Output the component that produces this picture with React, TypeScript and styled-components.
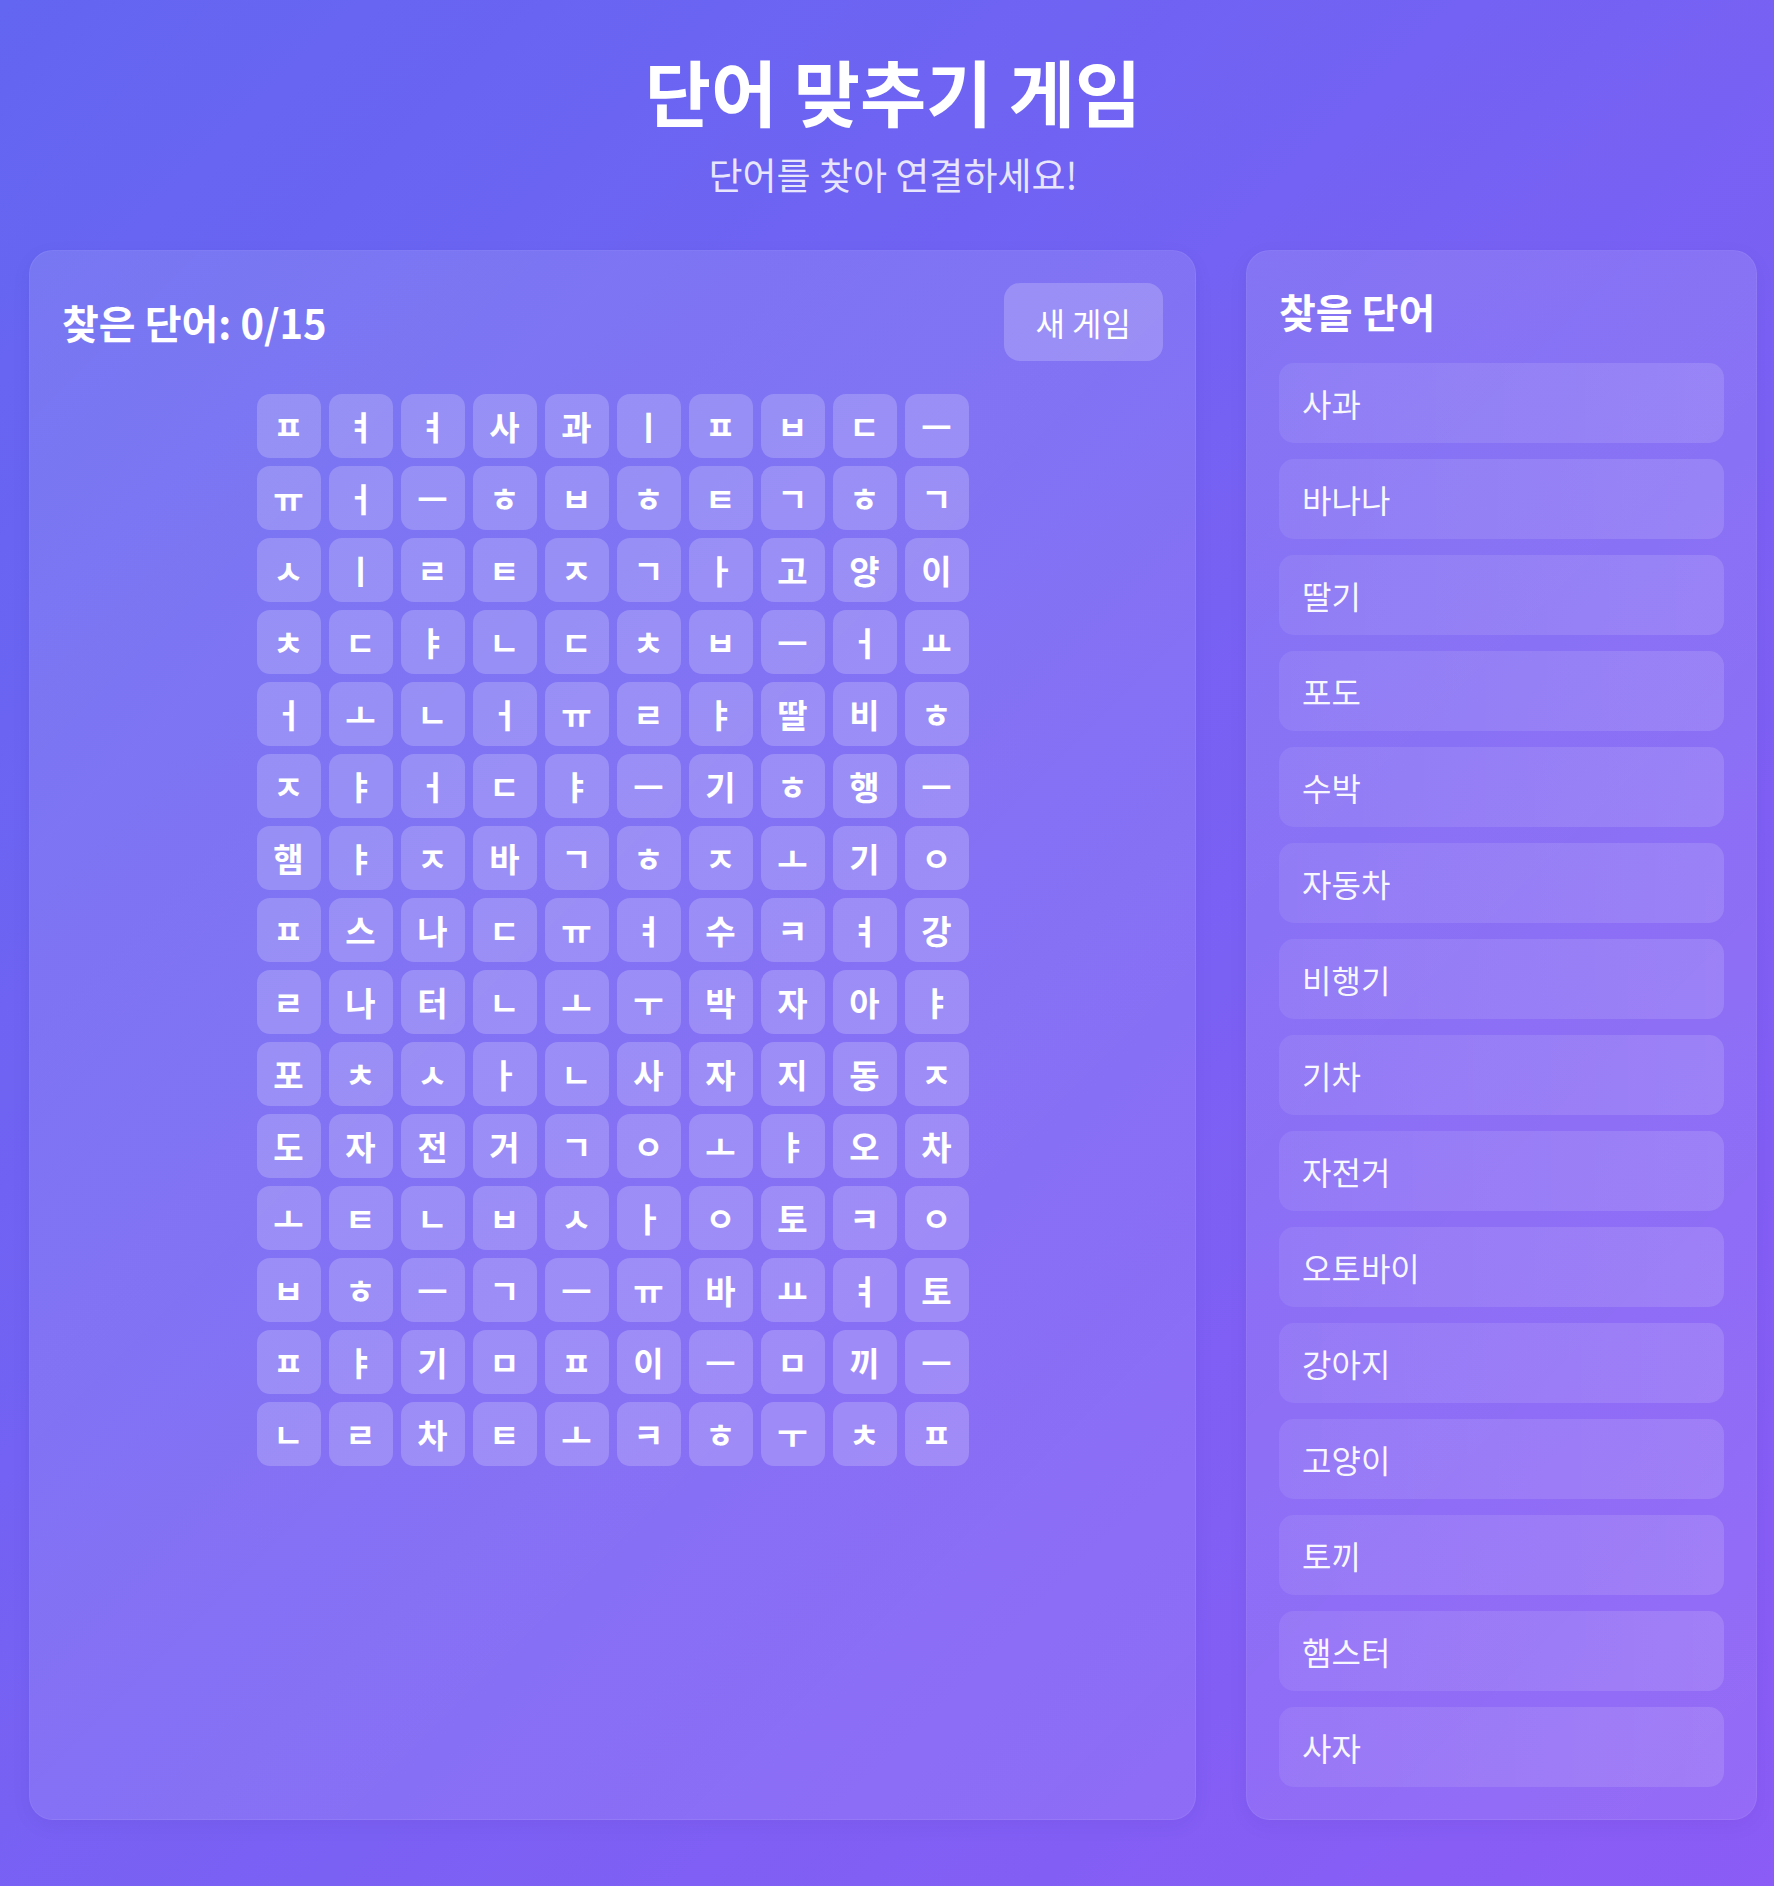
import React from 'react'
import styled, { createGlobalStyle } from 'styled-components'

const GlobalStyle = createGlobalStyle`
  html, body {
    margin: 0;
    padding: 0;
  }
  body {
    font-family: 'Noto Sans CJK KR', 'Noto Sans', sans-serif;
    color: #fff;
  }
  * {
    box-sizing: border-box;
  }
`

const Page = styled.div`
  min-height: 100vh;
  padding: 51px 17px 40px 29px;
  background: linear-gradient(135deg, #6366f1 0%, #8b5cf6 100%);
`

const Header = styled.header`
  text-align: center;
  margin-bottom: 51px;
`

const Title = styled.h1`
  margin: 0 0 21px;
  font-size: 72px;
  line-height: 77px;
  font-weight: 700;
`

const Subtitle = styled.p`
  margin: 0;
  font-size: 37px;
  line-height: 50px;
  font-weight: 400;
  color: rgba(255, 255, 255, 0.85);
`

const Layout = styled.main`
  display: grid;
  grid-template-columns: 1fr 511px;
  gap: 50px;
`

const Panel = styled.section`
  padding: 32px;
  border-radius: 24px;
  background: linear-gradient(135deg, rgba(255, 255, 255, 0.12) 0%, rgba(255, 255, 255, 0.09) 100%);
  border: 1px solid rgba(255, 255, 255, 0.06);
  box-shadow: 0 6px 20px rgba(40, 20, 120, 0.06);
`

const Toolbar = styled.div`
  display: flex;
  justify-content: space-between;
  align-items: center;
`

const Score = styled.h2`
  margin: 0;
  font-size: 40px;
  font-weight: 700;
`

const NewGameButton = styled.button`
  padding: 16px 32px;
  border: none;
  border-radius: 16px;
  background: rgba(255, 255, 255, 0.2);
  color: #fff;
  font-family: inherit;
  font-size: 32px;
  line-height: 46px;
  cursor: pointer;
`

const Board = styled.div`
  display: grid;
  grid-template-columns: repeat(10, 64px);
  grid-auto-rows: 64px;
  gap: 8px;
  justify-content: center;
  margin-top: 33px;
`

const Cell = styled.div`
  display: flex;
  align-items: center;
  justify-content: center;
  border-radius: 13px;
  background: rgba(255, 255, 255, 0.2);
  font-size: 33px;
  font-weight: 700;
  user-select: none;
`

const ListTitle = styled.h2`
  margin: 4px 0 28px;
  font-size: 40px;
  line-height: 48px;
  font-weight: 700;
`

const WordList = styled.ul`
  display: flex;
  flex-direction: column;
  gap: 16px;
  margin: 0;
  padding: 0;
  list-style: none;
`

const WordItem = styled.li<{ $found?: boolean }>`
  padding: 17px 23px;
  border-radius: 15px;
  background: linear-gradient(90deg, rgba(255, 255, 255, 0.08) 0%, rgba(255, 255, 255, 0.13) 100%);
  font-size: 32px;
  line-height: 46px;
  color: rgba(255, 255, 255, 0.95);
  text-decoration: ${p => (p.$found ? 'line-through' : 'none')};
`

const board = [
  'ㅍ ㅕ ㅕ 사 과 ㅣ ㅍ ㅂ ㄷ ㅡ',
  'ㅠ ㅓ ㅡ ㅎ ㅂ ㅎ ㅌ ㄱ ㅎ ㄱ',
  'ㅅ ㅣ ㄹ ㅌ ㅈ ㄱ ㅏ 고 양 이',
  'ㅊ ㄷ ㅑ ㄴ ㄷ ㅊ ㅂ ㅡ ㅓ ㅛ',
  'ㅓ ㅗ ㄴ ㅓ ㅠ ㄹ ㅑ 딸 비 ㅎ',
  'ㅈ ㅑ ㅓ ㄷ ㅑ ㅡ 기 ㅎ 행 ㅡ',
  '햄 ㅑ ㅈ 바 ㄱ ㅎ ㅈ ㅗ 기 ㅇ',
  'ㅍ 스 나 ㄷ ㅠ ㅕ 수 ㅋ ㅕ 강',
  'ㄹ 나 터 ㄴ ㅗ ㅜ 박 자 아 ㅑ',
  '포 ㅊ ㅅ ㅏ ㄴ 사 자 지 동 ㅈ',
  '도 자 전 거 ㄱ ㅇ ㅗ ㅑ 오 차',
  'ㅗ ㅌ ㄴ ㅂ ㅅ ㅏ ㅇ 토 ㅋ ㅇ',
  'ㅂ ㅎ ㅡ ㄱ ㅡ ㅠ 바 ㅛ ㅕ 토',
  'ㅍ ㅑ 기 ㅁ ㅍ 이 ㅡ ㅁ 끼 ㅡ',
  'ㄴ ㄹ 차 ㅌ ㅗ ㅋ ㅎ ㅜ ㅊ ㅍ',
].map(row => row.split(' '))

const words = [
  '사과', '바나나', '딸기', '포도', '수박',
  '자동차', '비행기', '기차', '자전거', '오토바이',
  '강아지', '고양이', '토끼', '햄스터', '사자',
]

function App() {
  const found: string[] = []
  return (
    <Page>
      <GlobalStyle />
      <Header>
        <Title>단어 맞추기 게임</Title>
        <Subtitle>단어를 찾아 연결하세요!</Subtitle>
      </Header>
      <Layout>
        <Panel>
          <Toolbar>
            <Score>찾은 단어: {found.length}/{words.length}</Score>
            <NewGameButton>새 게임</NewGameButton>
          </Toolbar>
          <Board>
            {board.map((row, r) =>
              row.map((ch, c) => <Cell key={`${r}-${c}`}>{ch}</Cell>)
            )}
          </Board>
        </Panel>
        <Panel>
          <ListTitle>찾을 단어</ListTitle>
          <WordList>
            {words.map(w => (
              <WordItem key={w} $found={found.includes(w)}>{w}</WordItem>
            ))}
          </WordList>
        </Panel>
      </Layout>
    </Page>
  )
}

export default App
